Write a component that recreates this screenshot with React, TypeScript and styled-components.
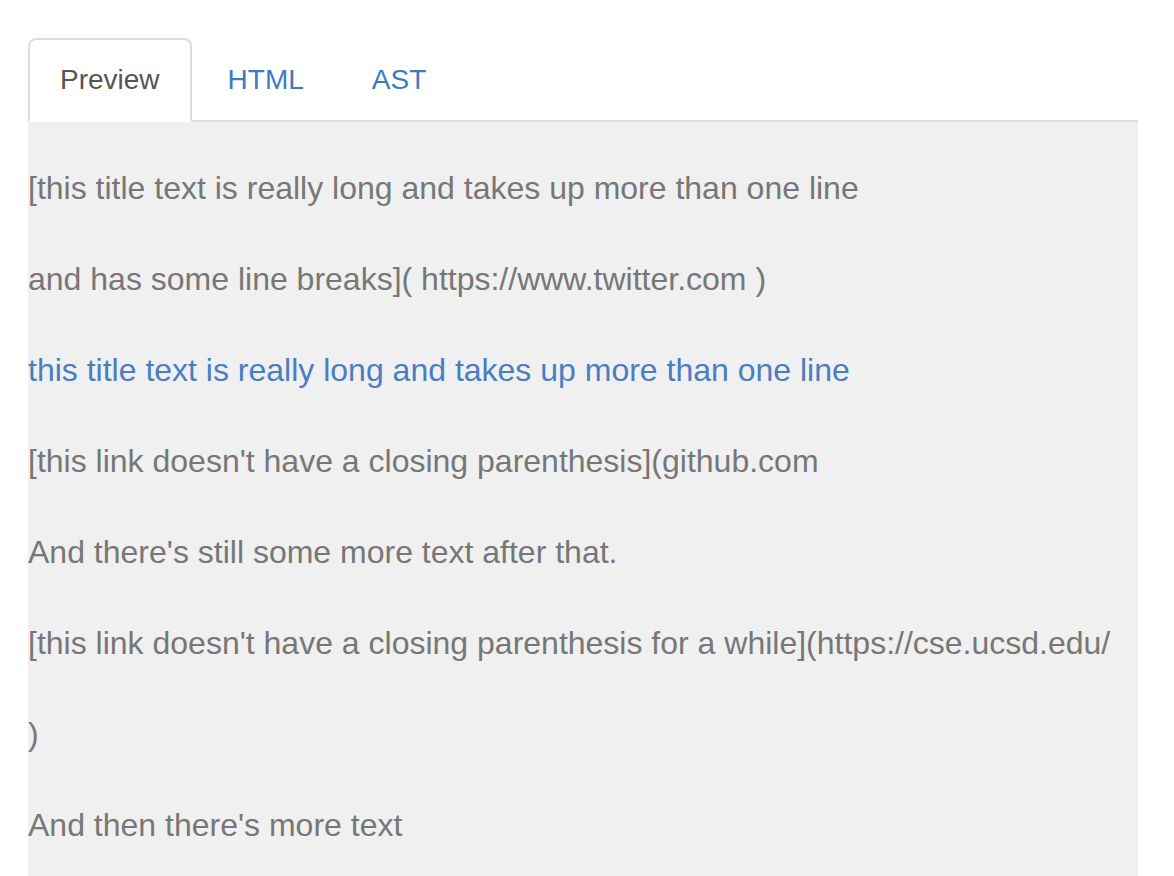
import styled, { createGlobalStyle } from "styled-components"

const Global = createGlobalStyle`
  body {
    margin: 0;
    background: #fff;
    font-family: "Liberation Sans", Arial, Helvetica, sans-serif;
  }
`

const tabs = ["Preview", "HTML", "AST"]

const App = () => {
  return (
    <>
      <Global />
      <Page>
        <TabBar>
          {tabs.map((t, i) => (
            <Tab key={t} $active={i === 0}>{t}</Tab>
          ))}
        </TabBar>
        <Panel>
          <Line>[this title text is really long and takes up more than one line</Line>
          <Line>and has some line breaks]( https://www.twitter.com )</Line>
          <Line><Link>this title text is really long and takes up more than one line</Link></Line>
          <Line>[this link doesn't have a closing parenthesis](github.com</Line>
          <Line>And there's still some more text after that.</Line>
          <Line>[this link doesn't have a closing parenthesis for a while](https://cse.ucsd.edu/</Line>
          <Line>)</Line>
          <Line>And then there's more text</Line>
        </Panel>
      </Page>
    </>
  )
}

export default App

const Page = styled.div`
  width: 1110px;
  margin-left: 28px;
  padding-top: 38px;
`

const TabBar = styled.ul`
  display: flex;
  margin: 0;
  padding: 0;
  list-style: none;
  border-bottom: 2px solid #ddd;
`

const Tab = styled.li<{ $active?: boolean }>`
  margin-right: 4px;
  margin-bottom: -2px;
  padding: 20px 30px;
  font-size: 28px;
  line-height: 40px;
  border: 2px solid ${p => (p.$active ? "#ddd" : "transparent")};
  border-bottom-color: ${p => (p.$active ? "#fff" : "transparent")};
  border-radius: 8px 8px 0 0;
  background: ${p => (p.$active ? "#fff" : "transparent")};
  color: ${p => (p.$active ? "#555" : "#3e7bbd")};
`

const Panel = styled.div`
  background: #f0f0f0;
  padding-top: 21px;
  min-height: 740px;
  overflow: hidden;
`

const Line = styled.p`
  margin: 0;
  font-size: 32px;
  line-height: 91px;
  color: #777;
  white-space: nowrap;
`

const Link = styled.span`
  color: #4a7ec0;
`
